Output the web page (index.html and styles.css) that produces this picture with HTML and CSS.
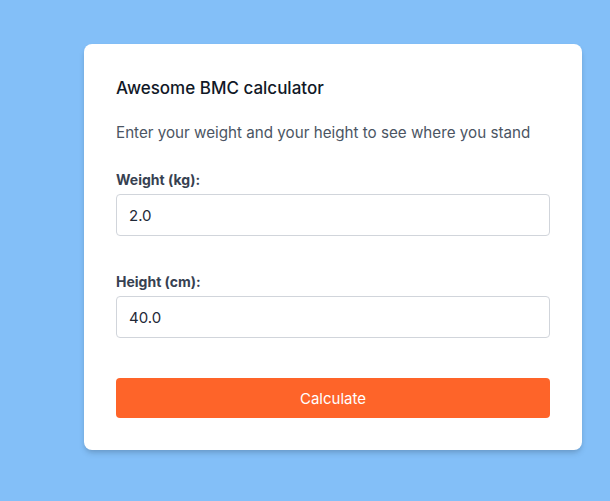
FILE: index.html
```html
<!DOCTYPE html>
<html>
<head>
<meta charset="utf-8">
<link rel="stylesheet" href="styles.css">
</head>
<body>
<div class="page">
  <form class="card">
    <h1 class="title">Awesome BMC calculator</h1>
    <p class="subtitle">Enter your weight and your height to see where you stand</p>
    <div class="field">
      <label class="label">Weight (kg):</label>
      <input class="input" type="text" value="2.0">
    </div>
    <div class="field field-second">
      <label class="label">Height (cm):</label>
      <input class="input" type="text" value="40.0">
    </div>
    <button class="button" type="button">Calculate</button>
  </form>
</div>
</body>
</html>
```
FILE: styles.css
```css
* { box-sizing: border-box; }
html, body {
  margin: 0;
  padding: 0;
  background: #83bff8;
  font-family: Inter, "Noto Sans", sans-serif;
}
.page {
  padding: 44px 0 0 84px;
  height: 501px;
}
.card {
  width: 498px;
  background: #fff;
  border-radius: 8px;
  padding: 32px;
  box-shadow: 0 4px 6px -1px rgba(0,0,0,0.15), 0 2px 4px -1px rgba(0,0,0,0.08);
  display: flex;
  flex-direction: column;
}
.title {
  margin: 0;
  font-size: 17px;
  line-height: 24px;
  font-weight: 500;
  color: #111827;
}
.subtitle {
  margin: 21px 0 0;
  font-size: 15.2px;
  line-height: 24px;
  color: #4b5563;
}
.field {
  display: flex;
  flex-direction: column;
  gap: 4px;
  margin-top: 25px;
}
.field-second { margin-top: 36px; }
.label {
  font-size: 14px;
  line-height: 20px;
  font-weight: 700;
  color: #374151;
}
.input {
  height: 42px;
  border: 1px solid #d1d5db;
  border-radius: 4px;
  padding: 0 12px;
  font-family: inherit;
  font-size: 15px;
  color: #1f2937;
  background: #fff;
  outline: none;
}
.button {
  margin-top: 40px;
  height: 40px;
  border: none;
  border-radius: 4px;
  background: #fe6429;
  color: #fff;
  font-family: inherit;
  font-size: 15px;
}
```
